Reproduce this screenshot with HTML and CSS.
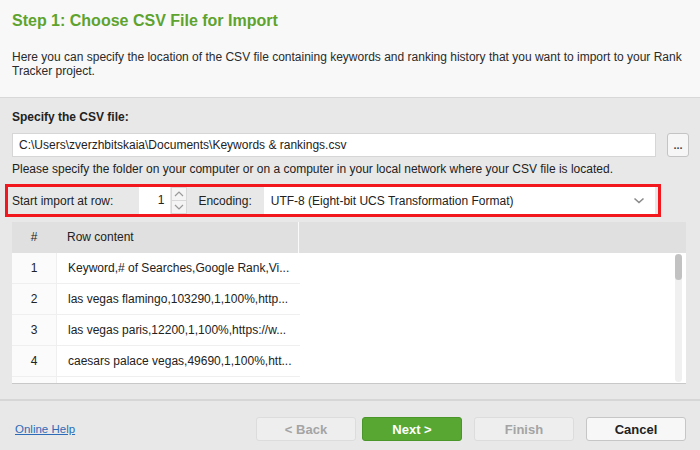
FILE: index.html
```html
<!DOCTYPE html>
<html lang="en">
<head>
  <meta charset="UTF-8">
  <title>Import from CSV - Rank Tracker</title>
  <link rel="stylesheet" href="styles.css">
</head>
<body>
  <div class="wizard">
    <div class="step-header">
      <h1>Step 1: Choose CSV File for Import</h1>
      <p>Here you can specify the location of the CSV file containing keywords and ranking history that you want to import to your Rank Tracker project.</p>
    </div>

    <div class="step-body">
      <div class="field-label">Specify the CSV file:</div>
      <div class="file-row">
        <div class="text-input">C:\Users\zverzhbitskaia\Documents\Keywords &amp; rankings.csv</div>
        <button class="browse-btn">...</button>
      </div>
      <div class="hint">Please specify the folder on your computer or on a computer in your local network where your CSV file is located.</div>

      <div class="options highlight">
        <span class="opt-label">Start import at row:</span>
        <div class="spinner">
          <div class="spin-value">1</div>
          <div class="spin-arrows">
            <span class="spin-btn">
              <svg width="10" height="6" viewBox="0 0 10 6"><path d="M1 5 L5 1 L9 5" fill="none" stroke="#9a9a9a" stroke-width="1.2"/></svg>
            </span>
            <span class="spin-btn">
              <svg width="10" height="6" viewBox="0 0 10 6"><path d="M1 1 L5 5 L9 1" fill="none" stroke="#9a9a9a" stroke-width="1.2"/></svg>
            </span>
          </div>
        </div>
        <span class="opt-label enc-label">Encoding:</span>
        <div class="select">
          <span>UTF-8 (Eight-bit UCS Transformation Format)</span>
          <svg width="12" height="7" viewBox="0 0 12 7"><path d="M1.5 1.5 L6 5.5 L10.5 1.5" fill="none" stroke="#8a8a8a" stroke-width="1.6"/></svg>
        </div>
      </div>

      <div class="preview">
        <div class="preview-head">
          <div class="col-num">#</div>
          <div class="col-content">Row content</div>
          <div class="col-rest"></div>
        </div>
        <div class="preview-body">
          <div class="rows">
            <div class="row"><div class="col-num">1</div><div class="col-content">Keyword,# of Searches,Google Rank,Vi...</div></div>
            <div class="row"><div class="col-num">2</div><div class="col-content">las vegas flamingo,103290,1,100%,http...</div></div>
            <div class="row"><div class="col-num">3</div><div class="col-content">las vegas paris,12200,1,100%,https://w...</div></div>
            <div class="row"><div class="col-num">4</div><div class="col-content">caesars palace vegas,49690,1,100%,htt...</div></div>
            <div class="row"><div class="col-num"></div><div class="col-content"></div></div>
          </div>
          <div class="scrollbar"><div class="thumb"></div></div>
        </div>
      </div>
    </div>

    <div class="footer">
      <a href="#" class="help-link">Online Help</a>
      <div class="buttons">
        <button class="btn btn-disabled">&lt; Back</button>
        <button class="btn btn-primary">Next &gt;</button>
        <button class="btn btn-disabled finish">Finish</button>
        <button class="btn btn-default finish">Cancel</button>
      </div>
    </div>
  </div>
</body>
</html>
```

FILE: styles.css
```css
body {
  margin: 0;
  font-family: "Liberation Sans", Arial, sans-serif;
  font-size: 12px;
  color: #222;
  background-color: #e8e8e8;
}
.wizard {
  width: 700px;
  height: 450px;
  overflow: hidden;
}
.step-header {
  height: 98px;
  box-sizing: border-box;
  padding: 10px 12px 0 12px;
  background-color: #f8f8f8;
  border-bottom: 1px solid #d8d8d8;
}
.step-header h1 {
  margin: 0;
  font-size: 16px;
  line-height: 22px;
  color: #5ea32e;
}
.step-header p {
  margin: 18px 0 0 0;
  line-height: 14px;
  color: #2a2a2a;
}
.step-body {
  padding: 12px 12px 0 12px;
}
.field-label {
  font-weight: bold;
  line-height: 14px;
}
.file-row {
  display: flex;
  align-items: center;
  margin-top: 9px;
}
.text-input {
  flex: 1;
  height: 24px;
  box-sizing: border-box;
  padding: 0 6px;
  line-height: 22px;
  background-color: #fff;
  border: 1px solid #d6d6d6;
  white-space: nowrap;
}
.browse-btn {
  width: 22px;
  height: 24px;
  margin-left: 11px;
  margin-right: -1px;
  padding: 0;
  font-family: inherit;
  font-size: 11px;
  font-weight: bold;
  line-height: 18px;
  color: #444;
  background-color: #f6f6f6;
  border: 1px solid #c4c4c4;
  border-radius: 3px;
}
.hint {
  margin-top: 5px;
  line-height: 14px;
}
.options {
  display: flex;
  align-items: center;
  height: 33px;
  box-sizing: border-box;
  margin: 8px 27px 0 -7px;
  padding: 0 3px 0 4px;
}
.highlight {
  border: 3px solid #f2171c;
}
.opt-label {
  white-space: nowrap;
}
.spinner {
  display: flex;
  height: 27px;
  margin-left: 26px;
}
.spin-value {
  width: 31px;
  box-sizing: border-box;
  padding-right: 6px;
  text-align: right;
  line-height: 27px;
  background-color: #fff;
}
.spin-arrows {
  display: flex;
  flex-direction: column;
  width: 16px;
  margin-left: 1px;
}
.spin-btn {
  flex: 1;
  display: flex;
  align-items: center;
  justify-content: center;
  background-color: #f4f4f4;
  border: 1px solid #d8d8d8;
}
.spin-btn + .spin-btn {
  border-top: none;
}
.enc-label {
  margin-left: 11px;
}
.select {
  flex: 1;
  display: flex;
  align-items: center;
  justify-content: space-between;
  height: 27px;
  margin-left: 12px;
  padding: 0 10px 0 7px;
  background-color: #fff;
}
.preview {
  margin-top: 5px;
  margin-right: 2px;
  height: 161px;
  background-color: #fff;
  box-shadow: 0 1px 0 #c8c8c8;
  overflow: hidden;
}
.preview-head {
  display: flex;
  height: 31px;
  line-height: 31px;
  background-color: #e0e0e0;
}
.preview-head .col-content {
  border-right: 1px solid #fafafa;
}
.col-num {
  width: 44px;
  flex: none;
  text-align: center;
}
.col-content {
  width: 243px;
  flex: none;
  box-sizing: border-box;
  padding-left: 11px;
  white-space: nowrap;
}
.col-rest {
  flex: 1;
}
.preview-body {
  display: flex;
  justify-content: space-between;
}
.rows {
  width: 288px;
}
.row {
  display: flex;
  height: 31px;
  line-height: 30px;
  border-bottom: 1px solid #efefef;
  box-sizing: border-box;
}
.row .col-num {
  background-color: #fbfbfb;
  border-right: 1px solid #efefef;
}
.scrollbar {
  width: 7px;
  height: 128px;
  margin: 1px 4px 0 0;
  border-radius: 4px;
  background-color: #f0f0f0;
}
.thumb {
  height: 26px;
  border-radius: 4px;
  background-color: #c2c2c2;
}
.footer {
  display: flex;
  align-items: center;
  justify-content: space-between;
  margin-top: 16px;
  padding: 16px 14px 0 15px;
  border-top: 2px solid #d6d6d6;
}
.help-link {
  font-size: 11.5px;
  color: #2d6bb8;
  text-decoration: underline;
}
.buttons {
  display: flex;
  gap: 6px;
}
.btn {
  width: 100px;
  height: 24px;
  padding: 0;
  font-family: inherit;
  font-size: 13px;
  font-weight: bold;
  border-radius: 3px;
}
.finish {
  margin-left: 6px;
}
.btn-disabled {
  color: #a4a4a4;
  background-color: #eeeeee;
  border: 1px solid #dcdcdc;
}
.btn-primary {
  color: #fff;
  background-color: #58a733;
  border: 1px solid #4b962a;
}
.btn-default {
  color: #222;
  background-color: #f7f7f7;
  border: 1px solid #c6c6c6;
}
```
